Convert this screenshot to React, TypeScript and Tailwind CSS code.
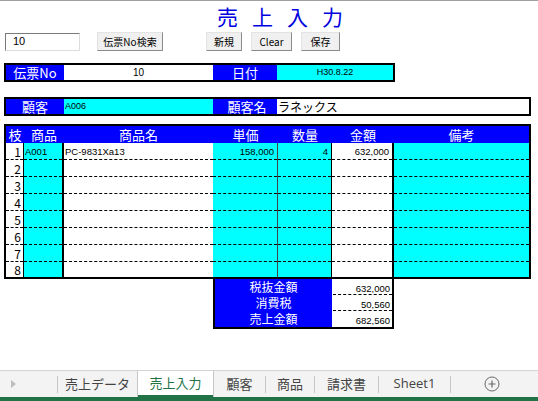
import React from 'react';

const JP = "font-['Noto_Sans_CJK_JP',sans-serif]";
const NUM = "font-['Liberation_Sans','Noto_Sans_CJK_JP',sans-serif]";

// table column definitions (inner widths add up to 523px)
const columns = [
    { label: '枝', cls: 'w-[18px] bg-white border-r border-black' },
    { label: '商品', cls: 'w-[40px] bg-[#00ffff] border-r-2 border-black' },
    { label: '商品名', cls: 'w-[149px] bg-white' },
    { label: '単価', cls: 'w-[65px] bg-[#00ffff] border-r border-[#444]' },
    { label: '数量', cls: 'w-[54px] bg-[#00ffff] border-r border-black' },
    { label: '金額', cls: 'w-[62px] bg-white border-r-2 border-black' },
    { label: '備考', cls: 'w-[135px] bg-[#00ffff]' },
];

const headerWidths = ['w-[18px]', 'w-[40px]', 'w-[149px]', 'w-[65px]', 'w-[54px]', 'w-[62px]', 'w-[135px]'];

const firstRow = ['A001', 'PC-9831Xa13', '158,000', '4', '632,000', ''];

function Button({ label, w }: { label: string; w: string }) {
    return (
        <div
            className={`${w} h-[19px] bg-[#f0f0f0] border border-t-[#e3e3e3] border-l-[#e3e3e3] border-r-[#8a8a8a] border-b-[#8a8a8a] flex items-center justify-center text-[10px] text-black ${JP}`}
        >
            {label}
        </div>
    );
}

function Tab({ label, w, active }: { label: string; w: string; active?: boolean }) {
    if (active) {
        return (
            <div className={`${w} h-full bg-white border-x border-[#c6c6c6] flex flex-col`}>
                <div className="flex-1 flex items-center justify-center text-[13px] text-[#217346]">{label}</div>
                <div className="h-[2px] bg-[#217346]" />
            </div>
        );
    }
    return (
        <div className={`${w} h-full flex items-center justify-center text-[13px] text-[#444]`}>{label}</div>
    );
}

function Sep() {
    return <div className="w-px h-[17px] bg-[#c6c6c6]" />;
}

export default function App() {
    return (
        <div className={`w-[538px] h-[401px] bg-white overflow-hidden flex flex-col ${JP}`}>
            <div className="h-px bg-[#a0a0a0]" />

            {/* title */}
            <div className="h-[31px] pl-[217px] pt-[2px] text-[21px] leading-[26px] tracking-[14px] text-[#0000e0]">
                売上入力
            </div>

            {/* controls */}
            <div className="flex items-center h-[19px]">
                <div className="ml-[5px] w-[75px] h-[18px] bg-white border border-t-[#7a7a7a] border-l-[#7a7a7a] border-r-[#dcdcdc] border-b-[#dcdcdc] pl-[7px] flex items-center text-[11px] text-black">
                    <span className={NUM}>10</span>
                </div>
                <div className="ml-[17px]">
                    <Button label="伝票No検索" w="w-[66px]" />
                </div>
                <div className="ml-[43px]">
                    <Button label="新規" w="w-[36px]" />
                </div>
                <div className="ml-[9px]">
                    <Button label="Clear" w="w-[41px]" />
                </div>
                <div className="ml-[9px]">
                    <Button label="保存" w="w-[39px]" />
                </div>
            </div>

            {/* 伝票No / 日付 */}
            <div className="mt-[12px] ml-[4px] w-[391px] h-[19px] border-2 border-black flex">
                <div className="w-[58px] bg-[#0000ff] text-white text-[13px] leading-[15px] text-center">伝票No</div>
                <div className={`w-[149px] bg-white text-[10px] leading-[15px] text-center text-black ${NUM}`}>10</div>
                <div className="w-[64px] bg-[#0000ff] text-white text-[13px] leading-[15px] text-center">日付</div>
                <div className={`w-[116px] bg-[#00ffff] text-[9px] leading-[15px] text-center text-black ${NUM}`}>H30.8.22</div>
            </div>

            {/* 顧客 */}
            <div className="mt-[15px] ml-[4px] w-[527px] h-[19px] border-2 border-black flex">
                <div className="w-[58px] bg-[#0000ff] text-white text-[13px] leading-[15px] text-center">顧客</div>
                <div className={`w-[149px] bg-[#00ffff] text-[9px] leading-[15px] pl-[1px] text-black ${NUM}`}>A006</div>
                <div className="w-[64px] bg-[#0000ff] text-white text-[13px] leading-[15px] text-center pl-[4px]">顧客名</div>
                <div className="w-[252px] bg-white text-[12px] leading-[15px] pl-[1px] text-black">ラネックス</div>
            </div>

            {/* detail table */}
            <div className="mt-[8px] ml-[4px] w-[527px] border-2 border-black flex flex-col">
                <div className="h-[17px] bg-[#0000ff] flex text-white text-[13px] leading-[17px]">
                    {columns.map((c, i) => (
                        <div key={i} className={`${headerWidths[i]} text-center`}>
                            {c.label}
                        </div>
                    ))}
                </div>
                {[...Array(8)].map((_, r) => (
                    <div key={r} className={`${r < 7 ? 'h-[17px]' : 'h-[15px]'} flex`}>
                        {columns.map((c, i) => (
                            <div key={i} className={`${c.cls} flex`}>
                                <div
                                    className={`flex-1 min-w-0 flex items-end overflow-hidden ${
                                        r < 7 ? 'border-b border-dashed border-black' : ''
                                    }`}
                                >
                                    {i === 0 && (
                                        <span className="w-full text-right pr-[2px] text-[12px] leading-[15px] text-black">
                                            {r + 1}
                                        </span>
                                    )}
                                    {i > 0 && r === 0 && firstRow[i - 1] && (
                                        <span
                                            className={`w-full text-[9.5px] leading-[14px] text-black ${NUM} ${
                                                i >= 3 ? 'text-right pr-[3px]' : 'pl-[1px]'
                                            }`}
                                        >
                                            {firstRow[i - 1]}
                                        </span>
                                    )}
                                </div>
                            </div>
                        ))}
                    </div>
                ))}
            </div>

            {/* totals */}
            <div className="ml-[213px] w-[181px] border-2 border-t-0 border-black flex">
                <div className="w-[117px] bg-[#0000ff] flex flex-col text-white text-[12px] leading-[16px] text-center">
                    <div className="h-[16px]">税抜金額</div>
                    <div className="h-[16px]">消費税</div>
                    <div className="h-[16px]">売上金額</div>
                </div>
                <div className={`w-[60px] bg-white flex flex-col text-[9.5px] text-black ${NUM}`}>
                    <div className="h-[16px] border-b border-dashed border-black text-right pr-[2px] leading-[19px] ml-[1px]">632,000</div>
                    <div className="h-[16px] border-b border-dashed border-black text-right pr-[2px] leading-[19px] ml-[1px]">50,560</div>
                    <div className="h-[16px] text-right pr-[2px] leading-[19px]">682,560</div>
                </div>
            </div>

            <div className="flex-1" />

            {/* sheet tabs */}
            <div className="h-[31px] flex flex-col bg-[#f3f3f3]">
                <div className="h-px bg-[#d4d4d4]" />
                <div className="flex-1 flex items-center">
                    <div className="w-[57px] h-full flex items-center pl-[11px]">
                        <svg width="5" height="8" viewBox="0 0 5 8">
                            <path d="M0 0 L5 4 L0 8 Z" fill="#bdbdbd" />
                        </svg>
                    </div>
                    <Sep />
                    <Tab label="売上データ" w="w-[79px]" />
                    <Tab label="売上入力" w="w-[77px]" active />
                    <Tab label="顧客" w="w-[51px]" />
                    <Sep />
                    <Tab label="商品" w="w-[48px]" />
                    <Sep />
                    <Tab label="請求書" w="w-[63px]" />
                    <Sep />
                    <div className={`w-[71px] h-full flex items-center justify-center text-[13px] text-[#444] font-['Open_Sans',sans-serif]`}>
                        Sheet1
                    </div>
                    <Sep />
                    <div className="ml-[33px]">
                        <svg width="16" height="16" viewBox="0 0 16 16">
                            <circle cx="8" cy="8" r="7" fill="none" stroke="#6a6a6a" strokeWidth="1" />
                            <path d="M8 4.5 V11.5 M4.5 8 H11.5" stroke="#6a6a6a" strokeWidth="1.2" />
                        </svg>
                    </div>
                </div>
                <div className="h-[4px] bg-[#217346]" />
            </div>
        </div>
    );
}
